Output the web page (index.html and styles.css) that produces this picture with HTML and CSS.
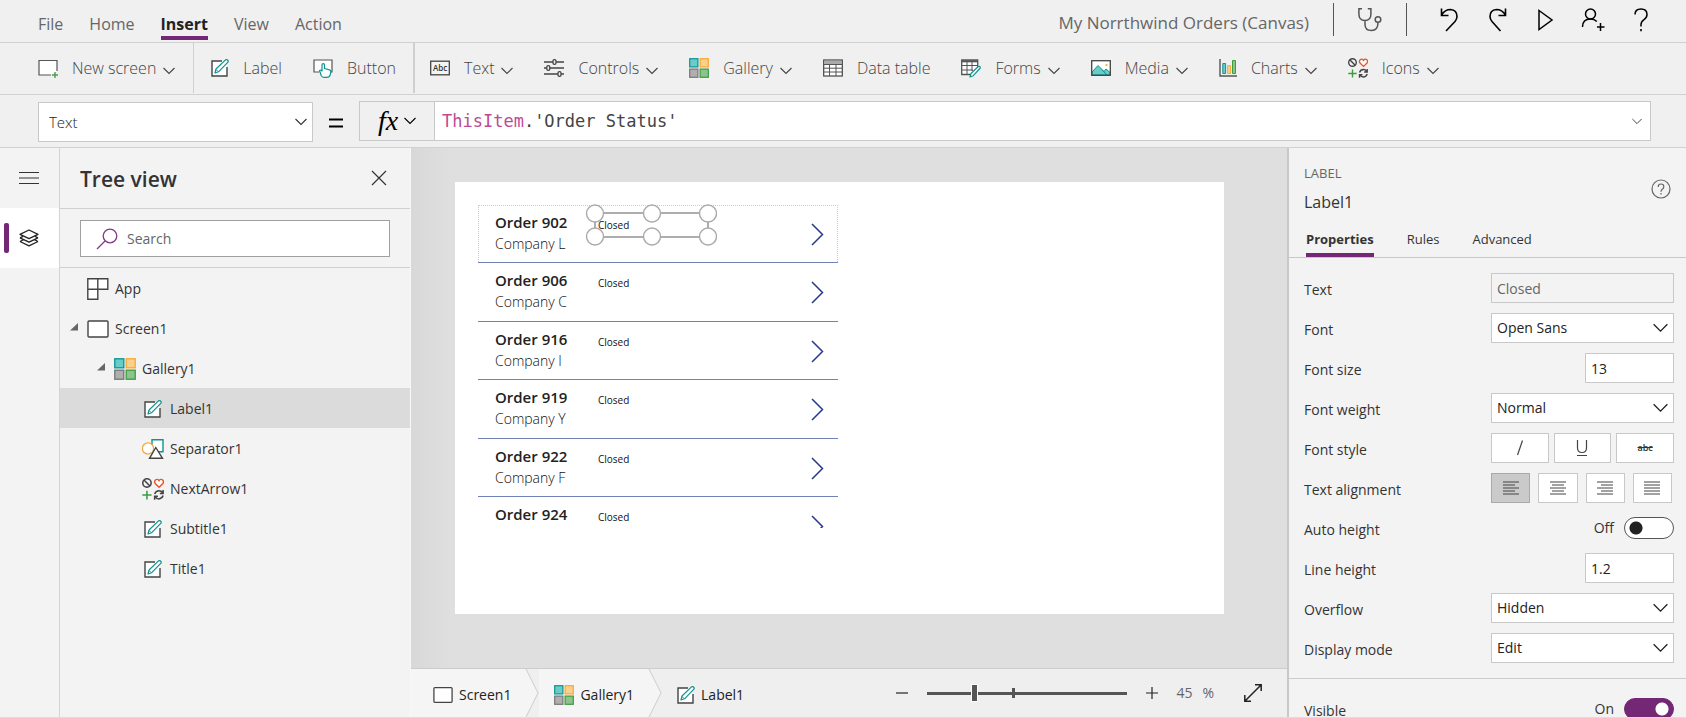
FILE: index.html
```
<!DOCTYPE html>
<html lang="en">
<head>
<meta charset="utf-8">
<title>My Norrthwind Orders (Canvas)</title>
<link rel="stylesheet" href="styles.css">
</head>
<body>
<svg class="sprite" aria-hidden="true">
  <symbol id="i-screen" viewBox="0 0 22 18"><rect x="1" y="1" width="20" height="16" rx="1" fill="#fff" stroke="#444" stroke-width="1.4"/></symbol>
  <symbol id="i-newscreen" viewBox="0 0 20 20"><path d="M13 17H1V2.500H19V13" fill="#fff" stroke="#555" stroke-width="1.200"/><path d="M17 14v6M14 17h6" stroke="#4a9e49" stroke-width="1.400"/></symbol>
  <symbol id="i-label" viewBox="0 0 18 18"><path d="M12 2H1v15h15V8" fill="#fff"/><path d="M11 2H1v15h15V8" fill="none" stroke="#444" stroke-width="1.400"/><path d="M4 14l1-4L14.500.900q1.500-.700 2.400.500.700 1.200-.200 2L7.500 12.800z" fill="#fff" stroke="#0f9390" stroke-width="1.200" stroke-linejoin="round"/><path d="M5 10.500l2 2" stroke="#0f9390"/></symbol>
  <symbol id="i-button" viewBox="0 0 20 20"><path d="M6 14H1V2h18v12h-2" fill="#fff" stroke="#555" stroke-width="1.200"/><path d="M6.500 12.500q1.500-1 2.500.500V7q0-1.300 1.200-1.300T11.500 7v3.500l5 1.300q1.500.300 1.300 2l-.600 3q-.700 2.500-3.500 2.500h-3q-1.500 0-2.400-1.500z" fill="#fff" stroke="#0f9390" stroke-width="1.200" stroke-linejoin="round"/></symbol>
  <symbol id="i-controls" viewBox="0 0 20 20"><g fill="#f0f0f0" stroke="#444" stroke-width="1.300"><path d="M0 4h20M0 10h20M0 16h20"/><rect x="9" y="1.600" width="3" height="4.800" rx="1.400"/><rect x="2.800" y="7.600" width="3" height="4.800" rx="1.400"/><rect x="14" y="13.600" width="3" height="4.800" rx="1.400"/></g></symbol>
  <symbol id="i-gallery" viewBox="0 0 20 20"><rect x=".7" y=".7" width="8.200" height="8.200" fill="#66cdc9" stroke="#0f9390" stroke-width="1.200"/><rect x="11.100" y=".7" width="8.200" height="8.200" fill="#fad08a" stroke="#f5a93a" stroke-width="1.200"/><rect x=".7" y="11.100" width="8.200" height="8.200" fill="#b0aeae" stroke="#777" stroke-width="1.200"/><rect x="11.100" y="11.100" width="8.200" height="8.200" fill="#8cc48b" stroke="#3c9c40" stroke-width="1.200"/></symbol>
  <symbol id="i-table" viewBox="0 0 20 18"><rect x=".7" y="1" width="18.600" height="16" fill="#fff" stroke="#444" stroke-width="1.200"/><path d="M1 2h18v3H1z" fill="#aaa"/><path d="M1 5.500h18M1 9.200h18M1 13h18M6.500 5v12M13 5v12" stroke="#555"/></symbol>
  <symbol id="i-forms" viewBox="0 0 20 20"><path d="M10 16.500H.7V2h16v7" fill="#fff" stroke="#555" stroke-width="1.300"/><path d="M1 3.300h15.500" stroke="#555" stroke-width="2"/><path d="M1 7.500h15M1 12h11M6 4v12M11 4v9" stroke="#555"/><path d="M9 19l1-3.500 7.300-7q2-.7 2 1.500L12.300 17.700z" fill="#fff" stroke="#0f9390" stroke-width="1.200" stroke-linejoin="round"/></symbol>
  <symbol id="i-media" viewBox="0 0 20 16"><rect x=".7" y=".7" width="18.600" height="14.600" fill="#fff"/><path d="M1 12l6-6.500 6 6 2-2.500 4 3.500V15H1z" fill="#66cdc9" stroke="#0f9390"/><path d="M11 9.800L16 15" stroke="#0f9390"/><circle cx="15.500" cy="5" r="1.100" fill="#f5a93a"/><rect x=".7" y=".7" width="18.600" height="14.600" fill="none" stroke="#444" stroke-width="1.300"/></symbol>
  <symbol id="i-charts" viewBox="0 0 18 18"><path d="M1 0v17h17" fill="none" stroke="#555" stroke-width="1.400"/><path d="M3.800 4.500h2.800v10H3.800z" fill="#66cdc9" stroke="#0f9390"/><path d="M8.600 6.700h3v7.800h-3z" fill="#fad08a" stroke="#f5a93a"/><path d="M13.500 1.500h3v13h-3z" fill="#8cc48b" stroke="#3c9c40"/></symbol>
  <symbol id="i-icons" viewBox="0 0 20 20"><g fill="none" stroke="#444" stroke-width="1.400"><circle cx="4.500" cy="4.500" r="3.800"/><path d="M1.800 1.800l5.400 5.400"/><path d="M11.500 14.500q1-3 4-3 2 0 3.200 1.800M19.200 11v3h-3M19.200 16q-1 3-4 3-2 0-3-1.800M11.500 19.800v-3.200h3"/></g><path d="M15.500 8.400L12 5q-1.200-1.700.2-3.200 1.900-1.400 3.300.6 1.400-2 3.300-.6Q20.200 3.300 19 5z" fill="#fff" stroke="#e8532b" stroke-width="1.300"/><path d="M4.500 11.500v8M.3 15.500h8.400" stroke="#3c9c40" stroke-width="1.400"/></symbol>
  <symbol id="i-shapes" viewBox="0 0 22 20"><path d="M10 .8h11v12H10z" fill="#fff" stroke="#0f9390" stroke-width="1.400"/><circle cx="6" cy="9.500" r="5.600" fill="#fff" stroke="#f5a93a" stroke-width="1.300"/><path d="M13.800 8.500L7.500 19.300h13z" fill="#fff" stroke="#444" stroke-width="1.400"/></symbol>
  <symbol id="i-app" viewBox="0 0 22 22"><path d="M.8.8h20v10.500h-10v10H.8z" fill="#fff" stroke="#444" stroke-width="1.400"/><path d="M10.800.8v10.500H.8" fill="none" stroke="#444" stroke-width="1.400"/></symbol>
  <symbol id="i-chev" viewBox="0 0 12 8"><path d="M.5 1L6 6.500 11.500 1" fill="none" stroke="currentColor" stroke-width="1.100"/></symbol>
  <symbol id="i-caret" viewBox="0 0 8 8"><path d="M8 0v7.500H0z" fill="#666"/></symbol>
</svg>

<header class="topbar">
  <nav class="menu">
    <a href="#">File</a><a href="#">Home</a><a href="#" class="current">Insert</a><a href="#">View</a><a href="#">Action</a>
  </nav>
  <span class="doc-title">My Norrthwind Orders (Canvas)</span>
  <div class="checker"><button aria-label="App checker"><svg width="24" height="24" viewBox="0 0 24 24"><path d="M4 .8H.9V6q0 6.500 6 6.500t6-6.500V.8H9.800M7 12.500v4q0 6 6.500 6t6.500-8" fill="none" stroke="#555" stroke-width="1.500"/><circle cx="20" cy="11.500" r="2.800" fill="none" stroke="#555" stroke-width="1.500"/></svg></button></div>
  <div class="actions">
    <button aria-label="Undo"><svg width="24" height="24" viewBox="0 0 24 24"><path d="M4.500.500V7.500H11.500M4.500 7Q8 1.500 13.500 1.500 20 2 20 8.500 20 11 18 13.500L9 23" fill="none" stroke="#000" stroke-width="1.600"/></svg></button>
    <button aria-label="Redo"><svg width="24" height="24" viewBox="0 0 24 24"><path d="M20.500.500V7.500H13.500M20.500 7Q17 1.500 11.500 1.500 5 2 5 8.500 5 11 7 13.500L15.500 23" fill="none" stroke="#000" stroke-width="1.600"/></svg></button>
    <button aria-label="Preview the app"><svg width="24" height="24" viewBox="0 0 24 24"><path d="M6 2.500L19 12 6 21.500z" fill="none" stroke="#000" stroke-width="1.500"/></svg></button>
    <button aria-label="Share"><svg width="24" height="24" viewBox="0 0 24 24"><circle cx="9.500" cy="6" r="5" fill="none" stroke="#000" stroke-width="1.500"/><path d="M1.500 19q0-8 8-8 4 0 6.300 2.500M19.500 15v8M16 19h7.500" fill="none" stroke="#000" stroke-width="1.500"/></svg></button>
    <button aria-label="Help"><svg width="24" height="24" viewBox="0 0 24 24"><path d="M6 6.500Q6 1 12 1t6 5.500q0 3-3 5.200-3 2-3 4.800v2" fill="none" stroke="#000" stroke-width="1.500"/><path d="M12 21v2.200" stroke="#000" stroke-width="1.600"/></svg></button>
  </div>
</header>

<div class="ribbon">
  <div class="group first"><button><svg class="ico"><use href="#i-newscreen"/></svg>New screen<svg class="chev"><use href="#i-chev"/></svg></button></div>
  <div class="group second"><button><svg class="ico sm"><use href="#i-label"/></svg>Label</button><button><svg class="ico"><use href="#i-button"/></svg>Button</button></div>
  <div class="group third">
    <button><svg class="ico" viewBox="0 0 20 16" aria-hidden="true"><rect x=".7" y="1.200" width="18.600" height="13.600" fill="#f4f4f4" stroke="#444" stroke-width="1.300"/><text x="10" y="11.300" text-anchor="middle" font-size="8" font-weight="600" fill="#333">Abc</text></svg>Text<svg class="chev"><use href="#i-chev"/></svg></button>
    <button><svg class="ico"><use href="#i-controls"/></svg>Controls<svg class="chev"><use href="#i-chev"/></svg></button>
    <button><svg class="ico"><use href="#i-gallery"/></svg>Gallery<svg class="chev"><use href="#i-chev"/></svg></button>
    <button><svg class="ico"><use href="#i-table"/></svg>Data table</button>
    <button><svg class="ico"><use href="#i-forms"/></svg>Forms<svg class="chev"><use href="#i-chev"/></svg></button>
    <button><svg class="ico"><use href="#i-media"/></svg>Media<svg class="chev"><use href="#i-chev"/></svg></button>
    <button><svg class="ico sm"><use href="#i-charts"/></svg>Charts<svg class="chev"><use href="#i-chev"/></svg></button>
    <button><svg class="ico"><use href="#i-icons"/></svg>Icons<svg class="chev"><use href="#i-chev"/></svg></button>
  </div>
</div>

<div class="formula-row">
  <div class="pick prop-pick"><select aria-label="Property"><option>Text</option></select><svg class="chev"><use href="#i-chev"/></svg></div>
  <svg class="equals" width="16" height="12" viewBox="0 0 16 12"><path d="M1 2.500h14M1 9.500h14" stroke="#000" stroke-width="2"/></svg>
  <div class="formula">
    <button class="fx" aria-label="Insert function"><span>fx</span><svg class="chev"><use href="#i-chev"/></svg></button>
    <div class="code" role="textbox" contenteditable="true" aria-label="Formula"><span class="ident">ThisItem</span>.'Order Status'</div>
    <button class="expand" aria-label="Expand formula bar"><svg class="chev small"><use href="#i-chev"/></svg></button>
  </div>
</div>

<main class="studio">
  <nav class="rail">
    <button aria-label="Menu"><svg width="20" height="12" viewBox="0 0 20 12"><path d="M0 .5h20M0 6h20M0 11.500h20" stroke="#333" stroke-width="1.200"/></svg></button>
    <button class="on" aria-label="Tree view"><svg width="20" height="18" viewBox="0 0 20 18"><g fill="none" stroke="#222" stroke-width="1.300" stroke-linejoin="round"><path d="M10 1l9 4.300-9 4.300-9-4.300z"/><path d="M1 8.800l9 4.300 9-4.300M1 12.500l9 4.300 9-4.300M1 8.800L4 7.300M19 8.800L16 7.300M1 12.500L4 11M19 12.500L16 11"/></g></svg></button>
  </nav>

  <aside class="tree">
    <div class="tree-head"><h1>Tree view</h1><button aria-label="Close"><svg width="16" height="16" viewBox="0 0 16 16"><path d="M1 1l14 14M15 1L1 15" stroke="#333" stroke-width="1.200"/></svg></button></div>
    <div class="tree-search"><label class="search"><svg width="22" height="22" viewBox="0 0 22 22"><circle cx="14" cy="8" r="6.800" fill="none" stroke="#833a85" stroke-width="1.300"/><path d="M9 13L1 21" stroke="#833a85" stroke-width="1.300"/></svg><input type="search" placeholder="Search" aria-label="Search"></label></div>
    <ul class="nodes">
      <li class="l0"><svg class="node"><use href="#i-app"/></svg>App</li>
      <li class="l0"><svg class="caret"><use href="#i-caret"/></svg><svg class="node"><use href="#i-screen"/></svg>Screen1</li>
      <li class="l1"><svg class="caret"><use href="#i-caret"/></svg><svg class="node"><use href="#i-gallery"/></svg>Gallery1</li>
      <li class="l2 selected"><svg class="node inner"><use href="#i-label"/></svg>Label1</li>
      <li class="l2"><svg class="node"><use href="#i-shapes"/></svg>Separator1</li>
      <li class="l2"><svg class="node"><use href="#i-icons"/></svg>NextArrow1</li>
      <li class="l2"><svg class="node inner"><use href="#i-label"/></svg>Subtitle1</li>
      <li class="l2"><svg class="node inner"><use href="#i-label"/></svg>Title1</li>
    </ul>
  </aside>

  <section class="center">
    <div class="workspace">
      <div class="artboard">
        <div class="gallery">
          <div class="item active"><div class="names"><b>Order 902</b><span>Company L</span></div><span class="status">Closed</span><svg class="next" viewBox="0 0 13 23"><path d="M1 1l10.500 10.500L1 22"/></svg></div>
          <div class="item"><div class="names"><b>Order 906</b><span>Company C</span></div><span class="status">Closed</span><svg class="next" viewBox="0 0 13 23"><path d="M1 1l10.500 10.500L1 22"/></svg></div>
          <div class="item"><div class="names"><b>Order 916</b><span>Company I</span></div><span class="status">Closed</span><svg class="next" viewBox="0 0 13 23"><path d="M1 1l10.500 10.500L1 22"/></svg></div>
          <div class="item"><div class="names"><b>Order 919</b><span>Company Y</span></div><span class="status">Closed</span><svg class="next" viewBox="0 0 13 23"><path d="M1 1l10.500 10.500L1 22"/></svg></div>
          <div class="item"><div class="names"><b>Order 922</b><span>Company F</span></div><span class="status">Closed</span><svg class="next" viewBox="0 0 13 23"><path d="M1 1l10.500 10.500L1 22"/></svg></div>
          <div class="item"><div class="names"><b>Order 924</b></div><span class="status">Closed</span><svg class="next" viewBox="0 0 13 23"><path d="M1 1l10.500 10.500L1 22"/></svg></div>
        </div>
        <svg class="selection" width="132" height="42" viewBox="0 0 132 42"><rect x="10" y="9" width="113" height="24" fill="none" stroke="#999" stroke-width="1.600"/><g fill="#fff" stroke="#aaa" stroke-width="1.400"><circle cx="10" cy="9.500" r="8.500"/><circle cx="67" cy="9.500" r="8.500"/><circle cx="123" cy="9.500" r="8.500"/><circle cx="10" cy="32.500" r="8.500"/><circle cx="67" cy="32.500" r="8.500"/><circle cx="123" cy="32.500" r="8.500"/></g></svg>
      </div>
    </div>
    <footer class="statusbar">
      <nav class="crumbs">
        <a href="#"><svg class="ico"><use href="#i-screen"/></svg>Screen1</a><svg class="sep" viewBox="0 0 14 48" preserveAspectRatio="none"><path d="M0 0h1L13 24 1 48H0z" fill="#f5f5f5"/><path d="M1 0L13 24 1 48" fill="none" stroke="#ccc"/></svg>
        <a href="#"><svg class="ico"><use href="#i-gallery"/></svg>Gallery1</a><svg class="sep" viewBox="0 0 14 48" preserveAspectRatio="none"><path d="M0 0h1L13 24 1 48H0z" fill="#f5f5f5"/><path d="M1 0L13 24 1 48" fill="none" stroke="#ccc"/></svg>
        <a href="#" class="last"><svg class="ico sm"><use href="#i-label"/></svg>Label1</a>
      </nav>
      <div class="zoom">
        <button aria-label="Zoom out"><svg width="12" height="12" viewBox="0 0 12 12"><path d="M0 6h12" stroke="#222" stroke-width="1.200"/></svg></button>
        <input type="range" min="0" max="200" value="45" aria-label="Zoom">
        <button aria-label="Zoom in"><svg width="12" height="12" viewBox="0 0 12 12"><path d="M0 6h12M6 0v12" stroke="#222" stroke-width="1.200"/></svg></button>
        <span class="pct">45</span><span class="unit">%</span>
        <button aria-label="Fit to window"><svg width="18" height="18" viewBox="0 0 18 18"><path d="M1 17L17 1M11 .8h6.200V7M.8 11v6.200H7" fill="none" stroke="#222" stroke-width="1.500"/></svg></button>
      </div>
    </footer>
  </section>

  <aside class="props">
    <div class="props-head"><div><div class="kind">LABEL</div><div class="name">Label1</div></div><button aria-label="Help"><svg width="20" height="20" viewBox="0 0 20 20"><circle cx="10" cy="10" r="9" fill="none" stroke="#666" stroke-width="1.200"/><path d="M7.200 8Q7.200 5 10 5t2.800 2.700q0 1.500-1.500 2.500-1.300 1-1.300 2.500M10 14v1.500" fill="none" stroke="#666" stroke-width="1.200"/></svg></button></div>
    <div class="tabs" role="tablist"><button role="tab" aria-selected="true" class="current">Properties</button><button role="tab">Rules</button><button role="tab">Advanced</button></div>
    <div class="fields">
      <div class="field"><label for="f-text">Text</label><input id="f-text" class="ro" value="Closed" readonly></div>
      <div class="field"><label for="f-font">Font</label><div class="pick"><select id="f-font"><option>Open Sans</option></select><svg class="chev big"><use href="#i-chev"/></svg></div></div>
      <div class="field"><label for="f-size">Font size</label><input id="f-size" class="short" value="13"></div>
      <div class="field"><label for="f-weight">Font weight</label><div class="pick"><select id="f-weight"><option>Normal</option></select><svg class="chev big"><use href="#i-chev"/></svg></div></div>
      <div class="field"><span class="caption">Font style</span><div class="styles">
        <button aria-label="Italic"><svg width="16" height="18" viewBox="0 0 16 18"><path d="M10.500 1.500L5.500 16" stroke="#444" stroke-width="1.200"/></svg></button>
        <button aria-label="Underline"><svg width="16" height="18" viewBox="0 0 16 18"><path d="M3.500 1v8q0 4.500 4.500 4.500T12.500 9V1M3 16.500h10" fill="none" stroke="#444" stroke-width="1.200"/></svg></button>
        <button class="strike" aria-label="Strikethrough">abc</button></div></div>
      <div class="field"><span class="caption">Text alignment</span><div class="aligns">
        <button class="on" aria-label="Left"><svg width="16" height="14" viewBox="0 0 16 14"><path d="M0 1h16M0 4h12M0 7h16M0 10h12M0 13h16"/></svg></button>
        <button aria-label="Center"><svg width="16" height="14" viewBox="0 0 16 14"><path d="M0 1h16M2 4h12M0 7h16M2 10h12M0 13h16"/></svg></button>
        <button aria-label="Right"><svg width="16" height="14" viewBox="0 0 16 14"><path d="M0 1h16M4 4h12M0 7h16M4 10h12M0 13h16"/></svg></button>
        <button aria-label="Justify"><svg width="16" height="14" viewBox="0 0 16 14"><path d="M0 1h16M0 4h16M0 7h16M0 10h16M0 13h16"/></svg></button></div></div>
      <div class="field"><label for="f-auto">Auto height</label><div class="switch"><span>Off</span><input type="checkbox" id="f-auto"></div></div>
      <div class="field"><label for="f-line">Line height</label><input id="f-line" class="short" value="1.2"></div>
      <div class="field"><label for="f-over">Overflow</label><div class="pick"><select id="f-over"><option>Hidden</option></select><svg class="chev big"><use href="#i-chev"/></svg></div></div>
      <div class="field"><label for="f-mode">Display mode</label><div class="pick"><select id="f-mode"><option>Edit</option></select><svg class="chev big"><use href="#i-chev"/></svg></div></div>
    </div>
    <div class="fields more"><div class="field"><label for="f-vis">Visible</label><div class="switch"><span>On</span><input type="checkbox" id="f-vis" checked></div></div></div>
  </aside>
</main>
</body>
</html>
```

FILE: styles.css
```
* { box-sizing: border-box; }
body {
  margin: 0; height: 100vh; display: flex; flex-direction: column; overflow: hidden;
  background: #f0f0f0; color: #333; font: 14px/20px "Open Sans", "Noto Sans", sans-serif;
  border-bottom: 1px solid #ddd;
}
.sprite { position: absolute; width: 0; height: 0; }
svg { flex: none; display: block; }
button { font: inherit; color: inherit; background: none; border: 0; padding: 0; margin: 0; display: flex; align-items: center; justify-content: center; cursor: pointer; }
a { color: inherit; text-decoration: none; }
input, select { font: inherit; color: #222; border: 1px solid #c8c8c8; border-radius: 0; background: #fff; margin: 0; outline: 0; }
.ico { width: 20px; height: 20px; }
.ico.sm { width: 18px; height: 18px; }
.chev { width: 12px; height: 8px; }

/* top bar */
.topbar { flex: none; height: 43px; display: flex; border-bottom: 1px solid #d0d0d0; color: #666; font-size: 16px; }
.menu { display: flex; gap: 26px; padding-left: 38px; align-items: flex-end; flex: 1; }
.menu a { line-height: 24px; border-bottom: 4px solid transparent; margin-bottom: 2px; }
.menu .current { font-weight: 700; color: #222; border-color: #742774; }
.doc-title { font-size: 17px; line-height: 46px; padding-right: 24px; white-space: nowrap; }
.checker { margin-top: 3px; height: 33px; width: 74px; border: solid #555; border-width: 0 1px; display: grid; place-items: center; }
.actions { display: flex; gap: 24px; padding: 8px 33px 0 30px; height: 32px; }

/* ribbon */
.ribbon { flex: none; height: 52px; display: flex; border-bottom: 1px solid #d0d0d0; color: #444; font-size: 16px; font-weight: 300; padding-bottom: 1px; }
.group { display: flex; align-items: center; gap: 31px; white-space: nowrap; }
.ribbon .ico { margin-right: 14px; }
.ribbon .chev { margin: 5px 0 0 7px; }
.first { padding: 0 18px 0 38px; }
.second { padding: 0 17px; border-left: 1px solid #d0d0d0; }
.third { padding-left: 15px; border-left: 2px solid #d0d0d0; }

/* formula row */
.formula-row { flex: none; height: 53px; display: flex; align-items: flex-start; padding: 6px 35px 0 38px; border-bottom: 1px solid #d0d0d0; }
.pick { display: grid; align-items: center; }
.pick > * { grid-area: 1 / 1; }
.pick select { appearance: none; width: 100%; height: 100%; padding: 0 30px 0 5px; }
.pick .chev { justify-self: end; margin-right: 6px; pointer-events: none; }
.prop-pick { width: 275px; height: 40px; margin-top: 1px; }
.prop-pick select { font-size: 15px; font-weight: 300; padding-left: 10px; }
.equals { margin: 16px 15px 0; }
.formula { flex: 1; height: 40px; display: flex; border: 1px solid #c8c8c8; background: #fff; }
.fx { width: 75px; background: #f0f0f0; border-right: 1px solid #c8c8c8; gap: 6px; color: #000; }
.fx span { font: italic 400 28px/32px "Liberation Serif", serif; }
.code { flex: 1; font: 17px/38px "DejaVu Sans Mono", monospace; color: #444; padding-left: 7px; outline: 0; }
.ident { color: #bd4b94; }
.expand { width: 26px; }
.chev.small { width: 10px; height: 7px; }

/* left side */
.studio { flex: 1; min-height: 0; display: flex; }
.rail { width: 60px; background: #f3f3f3; border-right: 1px solid #d4d4d4; }
.rail button { width: 100%; height: 60px; padding-right: 2px; }
.rail .on { background: #fff; position: relative; }
.rail .on::before { content: ""; position: absolute; left: 4px; top: 15px; width: 5px; height: 30px; border-radius: 2px; background: #742774; }
.tree { width: 351px; background: #f3f3f3; border-right: 1px solid #f8f8f8; }
.tree-head { height: 61px; border-bottom: 1px solid #d0d0d0; display: flex; justify-content: space-between; align-items: center; padding: 0 23px 0 20px; }
h1 { margin: 2px 0 0; font-size: 21px; line-height: 28px; font-weight: 600; }
.tree-search { padding: 11px 20px 10px; border-bottom: 1px solid #d0d0d0; }
.search { height: 37px; border: 1px solid #a0a0a0; background: #fff; display: flex; align-items: center; padding-left: 15px; gap: 9px; }
.search input { border: 0; flex: 1; min-width: 0; padding: 0; }
.search input::placeholder { color: #666; }
.nodes { list-style: none; margin: 0; padding: 0; }
.nodes li { height: 40px; display: flex; align-items: center; gap: 6px; padding-top: 2px; }
.node { width: 22px; height: 22px; }
.node.inner { width: 18px; height: 20px; margin: 0 2px; }
.caret { width: 8px; height: 8px; margin: 0 3px 4px -17px; }
.nodes .l0 { padding-left: 27px; }
.nodes .l1 { padding-left: 54px; }
.nodes .l2 { padding-left: 82px; }
.selected { background: #dbdbdb; }

/* canvas */
.center { flex: 1; min-width: 0; display: flex; flex-direction: column; }
.workspace { flex: 1; min-height: 0; display: grid; padding: 34px 63px 54px 44px; background: linear-gradient(90deg, #d8d8d8, #dfdfdf 40px); }
.artboard { background: #fff; padding: 23px; min-height: 0; position: relative; }
.gallery { width: 360px; height: 323px; overflow: hidden; }
.item { height: 58px; display: flex; border-bottom: 1px solid #7480b8; padding: 7px 14px 0 17px; position: relative; }
.item:nth-child(even) { height: 59px; }
.active::after { content: ""; position: absolute; inset: 0; border: dotted #ccc; border-width: 1px 1px 0; }
.names { width: 103px; color: #222; }
.names b { display: block; font-size: 15px; line-height: 20px; font-weight: 600; }
.names span { display: block; font-size: 14px; line-height: 24px; font-weight: 300; color: #111; }
.status { font-size: 10px; line-height: 12px; color: #111; padding-top: 7px; flex: 1; }
.next { width: 13px; height: 23px; margin-top: 11px; fill: none; stroke: #263a8f; stroke-width: 1.500; }
.selection { position: absolute; left: 130px; top: 22px; }
.active .status { position: relative; z-index: 2; }

/* status bar */
.statusbar { flex: none; height: 49px; display: flex; justify-content: space-between; border-top: 1px solid #ccc; background: #efefef; color: #222; }
.crumbs { display: flex; }
.crumbs a { display: flex; align-items: center; gap: 6px; background: #f5f5f5; padding: 3px 14px 0 15px; }
.crumbs a:first-child { padding-left: 22px; }
.crumbs .last { background: none; }
.sep { width: 14px; height: 48px; }
.zoom { display: flex; align-items: center; color: #666; padding-right: 25px; }
.zoom input { appearance: none; border: 0; width: 200px; height: 16px; margin: 0 19px; background: linear-gradient(#555, #555) 85px 50% / 3px 10px no-repeat, linear-gradient(#555, #555) 0 50% / 100% 3px no-repeat; }
.zoom input::-webkit-slider-thumb { appearance: none; width: 7px; height: 18px; background: #555; border: 1px solid #fff; border-radius: 0; }
.pct { margin-left: 18px; }
.unit { margin: 0 30px 0 10px; }

/* properties */
.props { width: 399px; border-left: 2px solid #c8c8c8; background: #f3f3f3; overflow: hidden; }
.props-head { display: flex; justify-content: space-between; padding: 15px 15px 0; height: 76px; }
.kind { font-size: 13px; color: #666; }
.name { font-size: 16px; line-height: 24px; margin-top: 7px; }
.props-head button { height: 20px; margin-top: 16px; }
.tabs { height: 34px; border-bottom: 1px solid #c8c8c8; display: flex; padding-left: 17px; gap: 33px; font-size: 13px; }
.tabs button { border-bottom: 4px solid transparent; }
.tabs .current { font-weight: 700; border-color: #742774; }
.fields { padding: 15px 12px 4px 15px; display: grid; gap: 10px; }
.field { height: 30px; display: flex; justify-content: space-between; align-items: center; }
.field > label, .caption { padding-top: 4px; }
.field > input, .field > .pick, .styles, .aligns { width: 183px; height: 30px; padding: 0 0 0 5px; }
.field > .pick, .styles, .aligns { padding: 0; }
.field > .short { width: 89px; }
.field > .ro { background: #f3f3f3; color: #666; }
.chev.big { width: 15px; height: 10px; color: #222; }
.styles, .aligns { display: grid; grid-template-columns: repeat(3, 1fr); gap: 5px; }
.aligns { grid-template-columns: repeat(4, 1fr); gap: 8px; padding-right: 2px; }
.styles button, .aligns button { border: 1px solid #c8c8c8; background: #fff; }
.aligns .on { background: #cacaca; border-color: #aaa; }
.aligns svg { stroke: #444; }
.strike { font-size: 9px; font-weight: 600; text-decoration: line-through; }
.switch { display: flex; align-items: center; gap: 10px; }
.switch input { appearance: none; width: 50px; height: 22px; border: 1px solid #555; border-radius: 11px; background: radial-gradient(circle at 11px 10px, #222 6px, transparent 7px) #fff; }
.switch input:checked { border-color: #742774; background: radial-gradient(circle at 37px 10px, #fff 6px, transparent 7px) #742774; }
.more { border-top: 1px solid #ccc; margin-top: 11px; }
```
